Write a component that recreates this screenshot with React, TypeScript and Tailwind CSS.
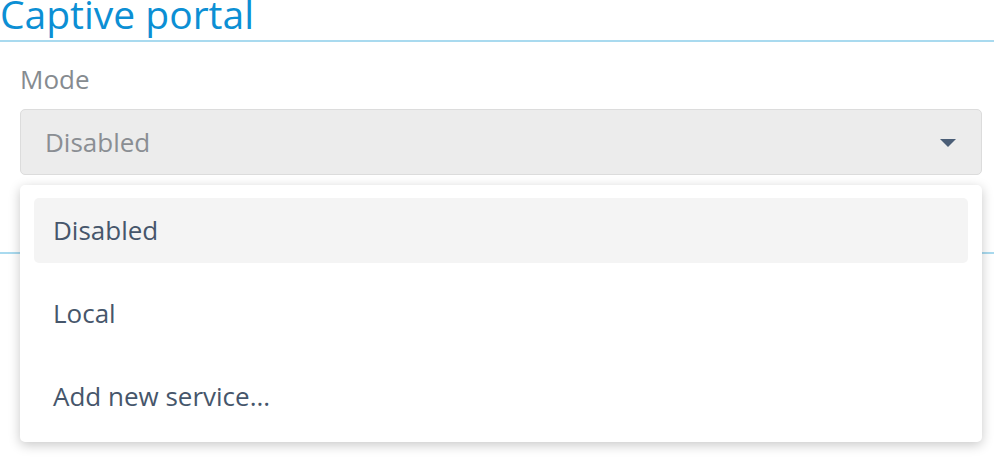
import React from "react";

export default function App() {
  const font = { fontFamily: '"Open Sans", "Noto Sans", sans-serif' };
  return (
    <div className="relative w-[994px] h-[457px] overflow-hidden bg-white" style={font}>
      <div className="border-b-2 border-[#a9daef] pb-[7px]">
        <h1 className="-mt-[5px] text-[39px] leading-[38px] text-[#0c8fd4] font-normal">Captive portal</h1>
      </div>
      <div className="pl-[20px] pr-[12px]">
        <div className="mt-[20px] text-[26px] leading-[35px] text-[#868b90]">Mode</div>
        <div className="mt-[12px] h-[66px] rounded-[5px] border border-[#dcdcdc] bg-[#ececec] flex items-center justify-between pl-[24px] pr-[25px]">
          <span className="text-[26px] text-[#8a8e93]">Disabled</span>
          <svg width="16" height="8" viewBox="0 0 16 8" className="mt-[1px]">
            <polygon points="0,0 16,0 8,8" fill="#4b5e77" />
          </svg>
        </div>
      </div>
      <div className="h-[79px] border-b-2 border-[#a9daef]" />
      <div className="absolute left-[20px] top-[185px] w-[962px] h-[257px] rounded-[5px] bg-white shadow-[0_3px_12px_rgba(0,0,0,0.22)] p-[13px] pl-[14px] pr-[14px] flex flex-col gap-[18px]">
        <div className="h-[65px] rounded-[5px] bg-[#f4f4f4] flex items-center pl-[19px] text-[26px] text-[#46566b]">Disabled</div>
        <div className="h-[65px] rounded-[5px] flex items-center pl-[19px] text-[26px] text-[#46566b]">Local</div>
        <div className="h-[65px] rounded-[5px] flex items-center pl-[19px] text-[26px] text-[#46566b]">Add new service...</div>
      </div>
    </div>
  );
}
